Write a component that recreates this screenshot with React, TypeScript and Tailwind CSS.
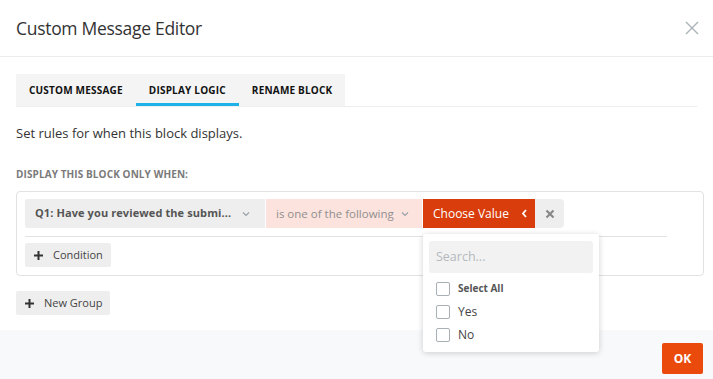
import React from 'react';

const ChevronDown = () => (
  <svg width="10" height="10" viewBox="0 0 10 10" fill="none" stroke="#9aa3a8" strokeWidth="1.2">
    <path d="M2 3.5l3 3 3-3" />
  </svg>
);

const Plus = () => (
  <svg width="11" height="11" viewBox="0 0 11 11" fill="none" stroke="#333" strokeWidth="2">
    <path d="M5.5 1v9M1 5.5h9" />
  </svg>
);

const Checkbox = ({ label, bold }: { label: string; bold?: boolean }) => (
  <div className="flex items-center gap-2 h-[23px]">
    <span className="w-[14px] h-[14px] rounded-[2px] border border-[#a7b0b5] bg-white" />
    <span className={bold ? 'text-[10px] font-bold text-[#555]' : 'text-[12px] text-[#444]'}>{label}</span>
  </div>
);

const App: React.FC = () => {
  return (
    <div className="w-[713px] h-[379px] bg-white flex flex-col overflow-hidden" style={{ fontFamily: '"Open Sans", sans-serif' }}>
      {/* header */}
      <header className="h-[57px] flex items-center justify-between pl-4 pr-[14px] border-b border-[#ececec] shrink-0">
        <h1 className="text-[17.5px] text-[#333] font-normal tracking-[-0.3px]">Custom Message Editor</h1>
        <svg width="14" height="14" viewBox="0 0 14 14" fill="none" stroke="#a9b3b8" strokeWidth="1.4">
          <path d="M1 1l12 12M13 1L1 13" />
        </svg>
      </header>

      <main className="flex-1 pl-4 pr-[9px] pt-[17px] relative">
        {/* tabs */}
        <div className="mr-[7px] border-b border-[#eeeeee]">
          <div className="inline-flex bg-[#f4f4f4] h-[32px]">
            <div className="px-[13px] flex items-center text-[10px] font-bold text-[#111] tracking-[0.2px]">CUSTOM MESSAGE</div>
            <div className="px-[13px] flex items-center text-[10px] font-bold text-[#111] tracking-[0.2px] border-b-[3px] border-[#1fb2e8] pt-[3px]">DISPLAY LOGIC</div>
            <div className="px-[13px] flex items-center text-[10px] font-bold text-[#111] tracking-[0.2px]">RENAME BLOCK</div>
          </div>
        </div>

        <p className="text-[13px] text-[#333] mt-[17px] leading-[18px]">Set rules for when this block displays.</p>
        <p className="text-[10px] font-bold text-[#7a7a7a] tracking-[0.1px] mt-[26px] leading-[12px]">DISPLAY THIS BLOCK ONLY WHEN:</p>

        {/* group */}
        <div className="mt-[11px] h-[85px] border border-[#e2e2e2] rounded-[4px] pt-[7px] pl-[8px] pr-[36px]">
          <div className="flex h-[29px]">
            <div className="w-[240px] bg-[#eeeeee] flex items-center justify-between pl-[10px] pr-[14px] rounded-l-[2px]">
              <span className="text-[11px] font-bold text-[#555] tracking-[0.1px]">Q1: Have you reviewed the submi...</span>
              <ChevronDown />
            </div>
            <div className="w-[156px] ml-px bg-[#fde3dd] flex items-center justify-between pl-[10px] pr-[12px]">
              <span className="text-[11.5px] text-[#8f8f8f]">is one of the following</span>
              <ChevronDown />
            </div>
            <div className="w-[112px] ml-px bg-[#d83d0b] flex items-center pl-[10px] gap-[12px]">
              <span className="text-[12px] text-white">Choose Value</span>
              <svg width="7" height="9" viewBox="0 0 7 9" fill="none" stroke="#fff" strokeWidth="1.8">
                <path d="M5 1L2 4.5 5 8" />
              </svg>
            </div>
            <div className="w-[29px] bg-[#eeeeee] rounded-r-[4px] flex items-center justify-center">
              <svg width="10" height="10" viewBox="0 0 10 10" fill="none" stroke="#888" strokeWidth="2.2">
                <path d="M1.5 1.5l7 7M8.5 1.5l-7 7" />
              </svg>
            </div>
          </div>
          <div className="border-t border-[#e2e2e2] mt-[8px]" />
          <button className="mt-[6px] h-[24px] px-[8px] bg-[#eeeeee] rounded-[2px] flex items-center gap-[9px] text-[11px] text-[#444]">
            <Plus />
            Condition
          </button>
        </div>

        <button className="mt-[15px] h-[24px] px-[8px] bg-[#eeeeee] rounded-[2px] flex items-center gap-[9px] text-[11px] text-[#444] whitespace-nowrap">
          <Plus />
          New Group
        </button>

        {/* dropdown menu */}
        <div className="absolute left-[423px] top-[177px] w-[176px] h-[118px] bg-white rounded-[3px] shadow-[0_1px_6px_rgba(0,0,0,0.18)] z-10 px-[6px] pt-[7px]">
          <div className="h-[32px] bg-[#f2f2f2] rounded-[3px] flex items-center px-[7px] text-[12.5px] text-[#b4b9bd]">Search...</div>
          <div className="mt-[4px] pl-[7px] flex flex-col">
            <Checkbox label="Select All" bold />
            <Checkbox label="Yes" />
            <Checkbox label="No" />
          </div>
        </div>
      </main>

      {/* footer */}
      <footer className="h-[49px] bg-[#f8f9fa] flex items-start justify-end pt-[13px] pr-[10px] shrink-0">
        <button className="w-[41px] h-[31px] bg-[#ea4a0c] text-white text-[12px] font-bold rounded-[2px]">OK</button>
      </footer>
    </div>
  );
};

export default App;
